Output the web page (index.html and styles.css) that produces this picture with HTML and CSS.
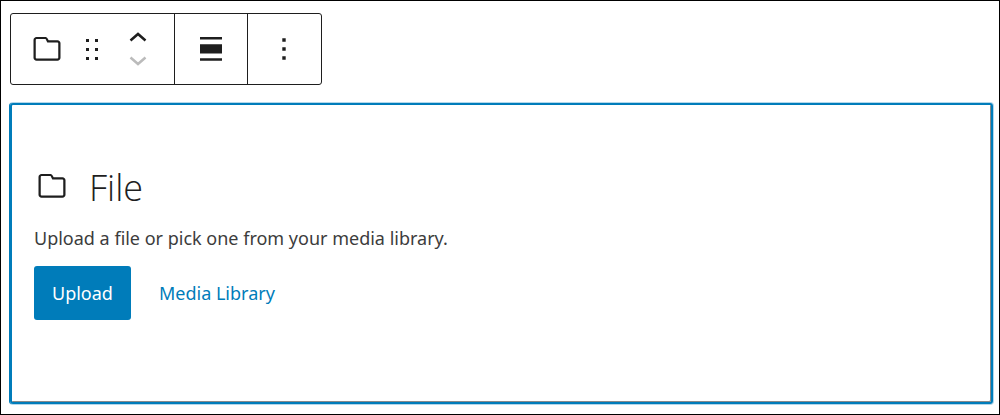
FILE: index.html
```html
<!DOCTYPE html>
<html lang="en">
<head>
  <meta charset="UTF-8">
  <meta name="viewport" content="width=device-width, initial-scale=1.0">
  <title>File block</title>
  <link rel="stylesheet" href="styles.css">
</head>
<body>
  <main class="editor">
    <!-- block toolbar -->
    <div class="toolbar" role="toolbar" aria-label="Block tools">
      <div class="toolbar-group">
        <button type="button" class="tool" aria-label="File">
          <svg class="icon" viewBox="0 0 24 24"><path d="M19 6.2h-5.9l-.6-1.1c-.3-.7-1-1.1-1.8-1.1H5c-1.1 0-2 .9-2 2v11.8c0 1.1.9 2 2 2h14c1.1 0 2-.9 2-2V8.2c0-1.1-.9-2-2-2zm.5 11.6c0 .3-.2.5-.5.5H5c-.3 0-.5-.2-.5-.5V5.8c0-.3.2-.5.5-.5h5.8c.2 0 .4.1.4.3l1 2H19c.3 0 .5.2.5.5v9.7z"/></svg>
        </button>
        <button type="button" class="tool" aria-label="Drag">
          <svg class="icon" viewBox="0 0 36 36"><path d="M12 8h3v3h-3zM21 8h3v3h-3zM12 17h3v3h-3zM21 17h3v3h-3zM12 26h3v3h-3zM21 26h3v3h-3z"/></svg>
        </button>
        <div class="movers">
          <button type="button" class="mover" aria-label="Move up">
            <svg viewBox="0 0 18 10"><path d="M1.5 8.5 9 2l7.5 6.5"/></svg>
          </button>
          <button type="button" class="mover" aria-label="Move down" disabled>
            <svg viewBox="0 0 18 10"><path d="M1.5 1.5 9 8l7.5-6.5"/></svg>
          </button>
        </div>
      </div>
      <div class="toolbar-group">
        <button type="button" class="tool" aria-label="Align">
          <svg class="icon" viewBox="0 0 36 36"><path d="M7 6h22v2.5H7zM7 13.200h22v9.300H7zM7 27.200h22v2.500H7z"/></svg>
        </button>
      </div>
      <div class="toolbar-group">
        <button type="button" class="tool" aria-label="Options">
          <svg class="icon" viewBox="0 0 36 36"><path d="M16.300 7.300h3.400v3.400h-3.400zM16.300 16.300h3.400v3.400h-3.400zM16.300 25.300h3.400v3.400h-3.400z"/></svg>
        </button>
      </div>
    </div>

    <!-- file block placeholder -->
    <section class="placeholder">
      <h1 class="title">
        <svg class="icon" viewBox="0 0 24 24"><path d="M19 6.2h-5.9l-.6-1.1c-.3-.7-1-1.1-1.8-1.1H5c-1.1 0-2 .9-2 2v11.8c0 1.1.9 2 2 2h14c1.1 0 2-.9 2-2V8.2c0-1.1-.9-2-2-2zm.5 11.6c0 .3-.2.5-.5.5H5c-.3 0-.5-.2-.5-.5V5.8c0-.3.2-.5.5-.5h5.8c.2 0 .4.1.4.3l1 2H19c.3 0 .5.2.5.5v9.7z"/></svg>
        File
      </h1>
      <p class="instructions">Upload a file or pick one from your media library.</p>
      <div class="actions">
        <button type="button" class="btn btn-primary">Upload</button>
        <button type="button" class="btn btn-link">Media Library</button>
      </div>
    </section>
  </main>
</body>
</html>
```
FILE: styles.css
```css
* {
  box-sizing: border-box;
}

body {
  margin: 0;
  background: #fff;
  color: #1e1e1e;
  font-family: "Segoe UI", "Noto Sans", sans-serif;
  font-size: 18px;
}

button {
  margin: 0;
  padding: 0;
  border: 0;
  background: none;
  color: inherit;
  font: inherit;
  cursor: pointer;
}

.editor {
  display: flex;
  flex-direction: column;
  align-items: flex-start;
  gap: 18px;
  min-height: 100vh;
  padding: 12px 6px 10px 9px;
  border: 1px solid #000;
}

/* toolbar */
.toolbar {
  display: flex;
  height: 72px;
  padding-right: 1px;
  border: 1px solid #1e1e1e;
  border-radius: 3px;
}

.toolbar-group {
  display: flex;
  align-items: center;
  padding: 0 18px;
}

.toolbar-group + .toolbar-group {
  border-left: 1px solid #1e1e1e;
}

.tool {
  display: flex;
}

.toolbar-group .tool + .tool {
  margin-left: 9px;
}

.icon {
  width: 36px;
  height: 36px;
  fill: currentColor;
}

.movers {
  display: flex;
  flex-direction: column;
  gap: 14px;
  margin: 0 9px 0 19px;
}

.mover {
  display: flex;
}

.mover svg {
  width: 18px;
  height: 10px;
  fill: none;
  stroke: currentColor;
  stroke-width: 2.5;
}

.mover:disabled {
  color: #bbb;
}

/* placeholder */
.placeholder {
  flex: 1;
  display: flex;
  flex-direction: column;
  justify-content: center;
  width: 100%;
  padding: 0 22px 24px;
  border: 2px solid #007cba;
  border-radius: 3px;
  box-shadow: -1px 0 #007cba, 0 0 0 1px #b3d7ea, inset -1px -1px #8a8a8a;
}

.title {
  display: flex;
  align-items: center;
  gap: 19px;
  margin: 0;
  font-family: "Segoe UI", "Open Sans", sans-serif;
  font-size: 36px;
  font-weight: 300;
  line-height: 48px;
}

.title .icon {
  margin-bottom: 4px;
}

.instructions {
  margin: 12px 0 14px;
  color: #3c3c3c;
  line-height: 28px;
}

.actions {
  display: flex;
  gap: 10px;
}

.btn {
  height: 54px;
  padding: 0 18px;
  border-radius: 3px;
}

.btn-primary {
  background: #007cba;
  color: #fff;
}

.btn-link {
  color: #007cba;
}
```
